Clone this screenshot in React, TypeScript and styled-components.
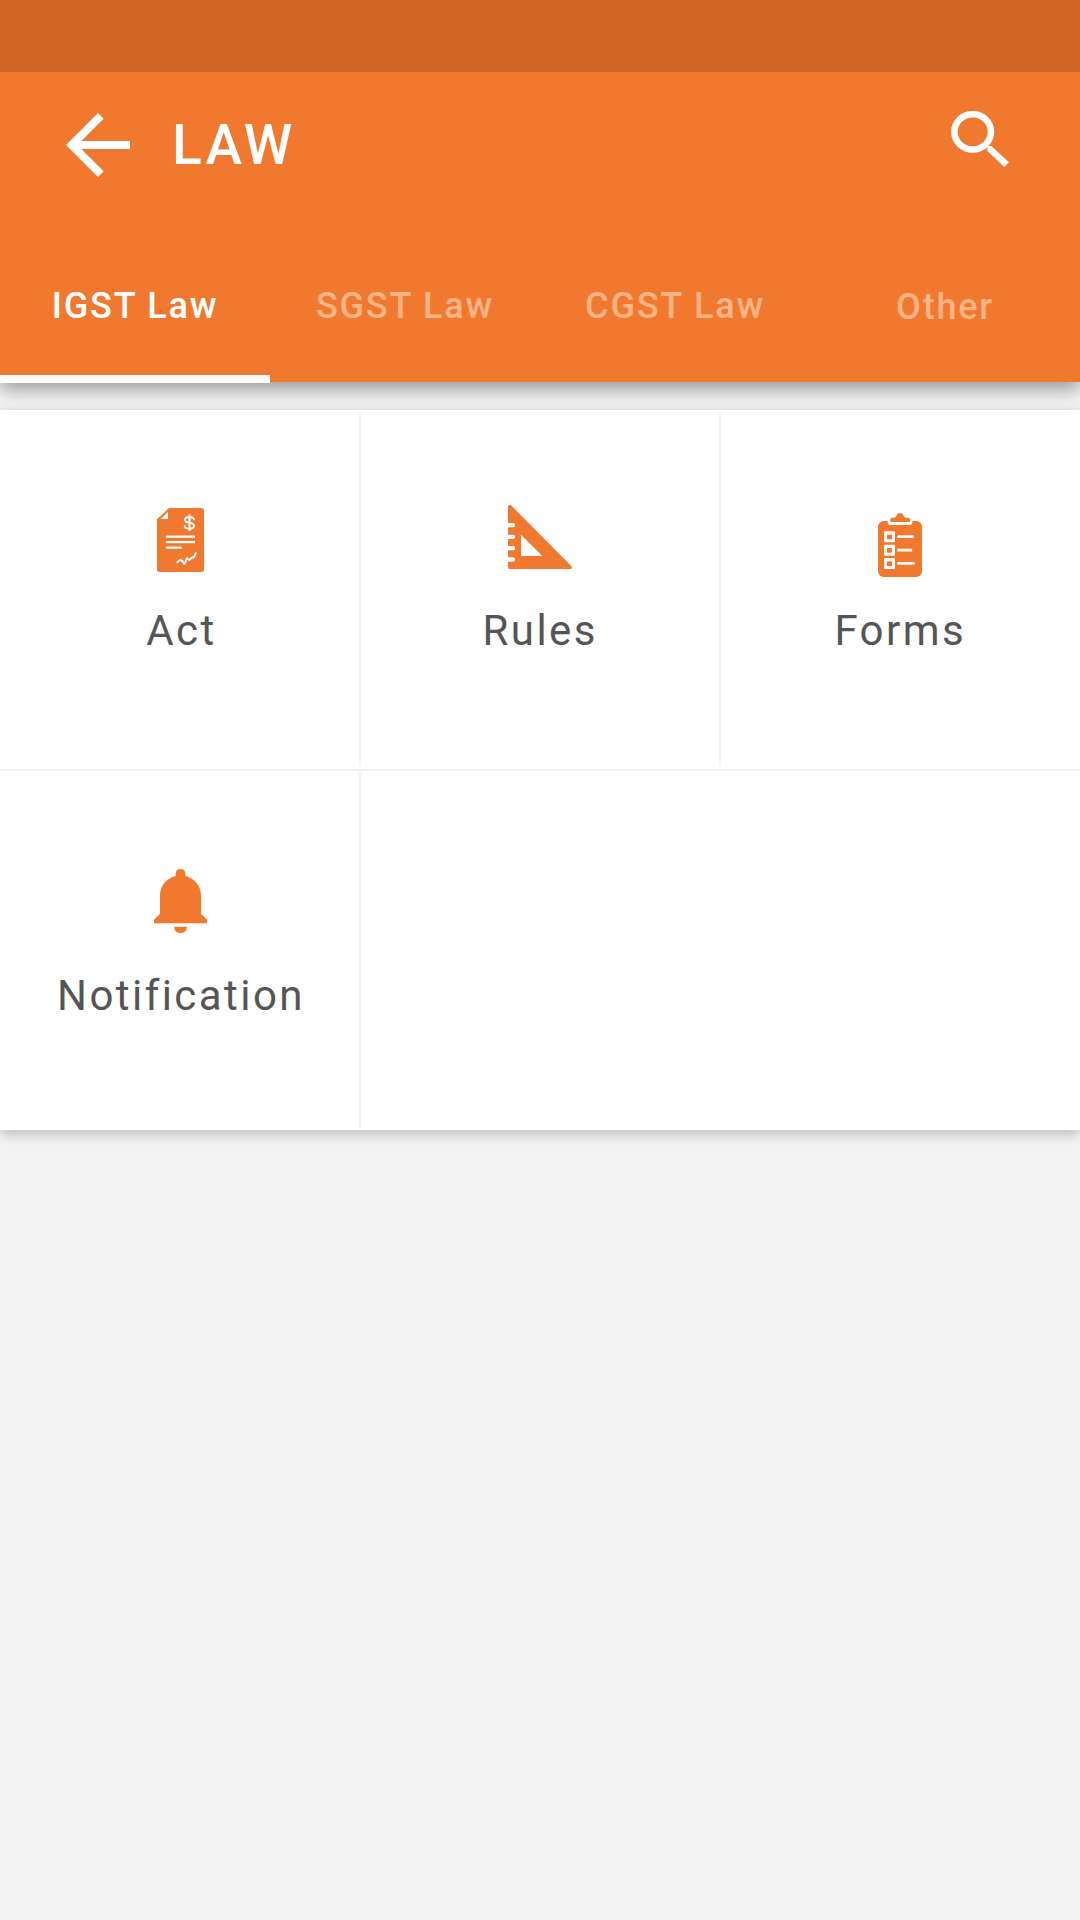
import React from "react";
import styled, { createGlobalStyle } from "styled-components";

const ORANGE = "#f1792f";

const GlobalStyle = createGlobalStyle`
  body { margin: 0; background: #f3f3f3; }
  * { box-sizing: border-box; }
  button { border: 0; background: none; padding: 0; font: inherit; color: inherit; }
  svg { display: block; }
`;

const Screen = styled.div`
  width: 1080px;
  min-height: 1920px;
  background: #f3f3f3;
  font-family: Roboto, sans-serif;
  overflow: hidden;
`;

const StatusBar = styled.div`
  position: relative;
  z-index: 1;
  height: 72px;
  background: #d06526;
`;

const Header = styled.header`
  height: 310px;
  background: ${ORANGE};
  box-shadow: 0 8px 17px rgba(0, 0, 0, 0.35);
  display: flex;
  flex-direction: column;
`;

const Toolbar = styled.div`
  height: 146px;
  flex-shrink: 0;
  display: flex;
  align-items: center;
  padding: 0 71px 0 66px;
  color: #fff;
`;

const Title = styled.h1`
  margin: 0 0 0 42px;
  flex: 1;
  font-size: 55px;
  line-height: 64px;
  font-weight: 500;
  letter-spacing: 3.3px;
`;

const SearchButton = styled.button`
  margin-top: -12px;
`;

const Tabs = styled.nav`
  flex: 1;
  display: grid;
  grid-template-columns: repeat(4, 1fr);
`;

const Tab = styled.button<{ $active?: boolean; $top?: number }>`
  height: 165px;
  display: flex;
  justify-content: center;
  align-items: flex-start;
  padding-top: ${(p) => p.$top ?? 67}px;
  font-size: 36px;
  line-height: 42px;
  font-weight: 500;
  letter-spacing: 1.8px;
  color: ${(p) => (p.$active ? "#fff" : "#ffb488")};
  border-bottom: 8px solid ${(p) => (p.$active ? "#fff" : "transparent")};
`;

const Card = styled.main`
  margin-top: 28px;
  height: 720px;
  background: #fff;
  box-shadow: 0 4px 12px rgba(0, 0, 0, 0.24);
  display: grid;
  grid-template-rows: 359px 2px 359px;
`;

const Row = styled.div`
  display: grid;
  grid-template-columns: 359px 2px 358px 2px 359px;
`;

const RowDivider = styled.div`
  background: #f3f3f3;
`;

const ColumnDivider = styled.div<{ $top?: number }>`
  margin: ${(p) => p.$top ?? 3}px 0 3px;
  background: #f3f3f3;
`;

const Cell = styled.div<{ $top: number; $left?: number; $right?: number }>`
  display: flex;
  flex-direction: column;
  align-items: center;
  padding-top: ${(p) => p.$top}px;
  margin-left: ${(p) => p.$left ?? 0}px;
  margin-right: ${(p) => p.$right ?? 0}px;
`;

const Label = styled.span<{ $gap: number; $indent?: number }>`
  margin-top: ${(p) => p.$gap}px;
  padding-left: ${(p) => p.$indent ?? 0.5}px;
  font-size: 42px;
  line-height: 50px;
  letter-spacing: 2.45px;
  color: #555;
`;

const BackIcon = () => (
  <svg width="64" height="64" viewBox="4 4 16 16" fill="#fff">
    <path d="M20 11H7.83l5.59-5.59L12 4l-8 8 8 8 1.41-1.41L7.83 13H20v-2z" />
  </svg>
);

const SearchIcon = () => (
  <svg width="58" height="56" viewBox="93 63 174 168">
    <ellipse cx="158" cy="125.500" rx="55" ry="53" fill="none" stroke="#fff" strokeWidth="19.500" />
    <path d="M202 164L207 168L214 168L267 217L253 231L202 183Z" fill="#fff" />
  </svg>
);

const ActIcon = () => (
  <svg width="47" height="64" viewBox="81 54 141 192">
    <path
      d="M117 54H214Q222 54 222 62V238Q222 246 214 246H89Q81 246 81 238V88Z"
      fill={ORANGE}
    />
    <path d="M114 66V87H92Z" fill="#fff" />
    <g fill="none" stroke="#fff" strokeLinecap="round" strokeLinejoin="round">
      <path d="M111 140H192M111 156.500H192M111 173H152" strokeWidth="7" />
      <path d="M142 217L150 209L158 214L163 222L171 205L178 210L186 202L191 203L198 189" strokeWidth="6" />
      <path
        d="M192 88Q190 81 178 81Q165 81 165 89Q165 96 178 98Q192 100 192 108Q192 116 178 116Q165 116 164 108M178.500 76V121"
        strokeWidth="6"
      />
    </g>
  </svg>
);

const RulesIcon = () => (
  <svg width="64" height="64" viewBox="114 45 192 192">
    <path
      fillRule="evenodd"
      fill={ORANGE}
      d="M114 49Q114 45 119 45Q122 45 125 48L303 227Q306 230 306 233Q306 237 301 237H119Q114 237 114 231V215H129A6 6 0 0 0 129 202H114V181H129A6 6 0 0 0 129 168H114V147H129A6 6 0 0 0 129 134H114V112H129A6 6 0 0 0 129 99H114ZM153 134V198H217Z"
    />
  </svg>
);

const FormsIcon = () => (
  <svg width="44" height="64" viewBox="174 69 132 192">
    <rect x="174" y="93" width="132" height="168" rx="17" fill={ORANGE} />
    <path d="M203 92V97Q203 105 211 105H269Q277 105 277 97V92Z" fill="#fff" />
    <path
      d="M211 96V88Q211 83 217 83H222Q228 83 230 76Q233 69 240 69Q247 69 250 76Q252 83 258 83H263Q270 83 270 88V96Z"
      fill={ORANGE}
    />
    {[124, 164, 204].map((y) => (
      <React.Fragment key={y}>
        <rect x="192" y={y} width="33" height="33" rx="3" fill="#fff" />
        <rect x="201" y={y + 10} width="15" height="14" fill={ORANGE} />
      </React.Fragment>
    ))}
    <path d="M235 140H278M235 180.500H273M235 220H281" stroke="#fff" strokeWidth="8" strokeLinecap="round" />
  </svg>
);

const BellIcon = () => (
  <svg width="53" height="64" viewBox="342 57 159 192" fill={ORANGE}>
    <path d="M407 78V71Q407 57 421.500 57Q436 57 436 71V78C464 85 483 107 483 138V191L501 209V220H342V209L360 191V138C360 107 379 85 407 78Z" />
    <path d="M402 230H441Q439 249 421.500 249Q404 249 402 230Z" />
  </svg>
);

export default function App() {
  return (
    <Screen>
      <GlobalStyle />
      <StatusBar />
      <Header>
        <Toolbar>
          <button aria-label="Back">
            <BackIcon />
          </button>
          <Title>LAW</Title>
          <SearchButton aria-label="Search">
            <SearchIcon />
          </SearchButton>
        </Toolbar>
        <Tabs>
          <Tab $active>IGST Law</Tab>
          <Tab>SGST Law</Tab>
          <Tab>CGST Law</Tab>
          <Tab $top={68}>Other</Tab>
        </Tabs>
      </Header>
      <Card>
        <Row>
          <Cell $top={98} $right={-2}>
            <ActIcon />
            <Label $gap={34} $indent={2}>Act</Label>
          </Cell>
          <ColumnDivider />
          <Cell $top={95}>
            <RulesIcon />
            <Label $gap={37}>Rules</Label>
          </Cell>
          <ColumnDivider />
          <Cell $top={103} $left={-1}>
            <FormsIcon />
            <Label $gap={29}>Forms</Label>
          </Cell>
        </Row>
        <RowDivider />
        <Row>
          <Cell $top={98} $right={-2}>
            <BellIcon />
            <Label $gap={38} $indent={1}>Notification</Label>
          </Cell>
          <ColumnDivider $top={2} />
        </Row>
      </Card>
    </Screen>
  );
}
